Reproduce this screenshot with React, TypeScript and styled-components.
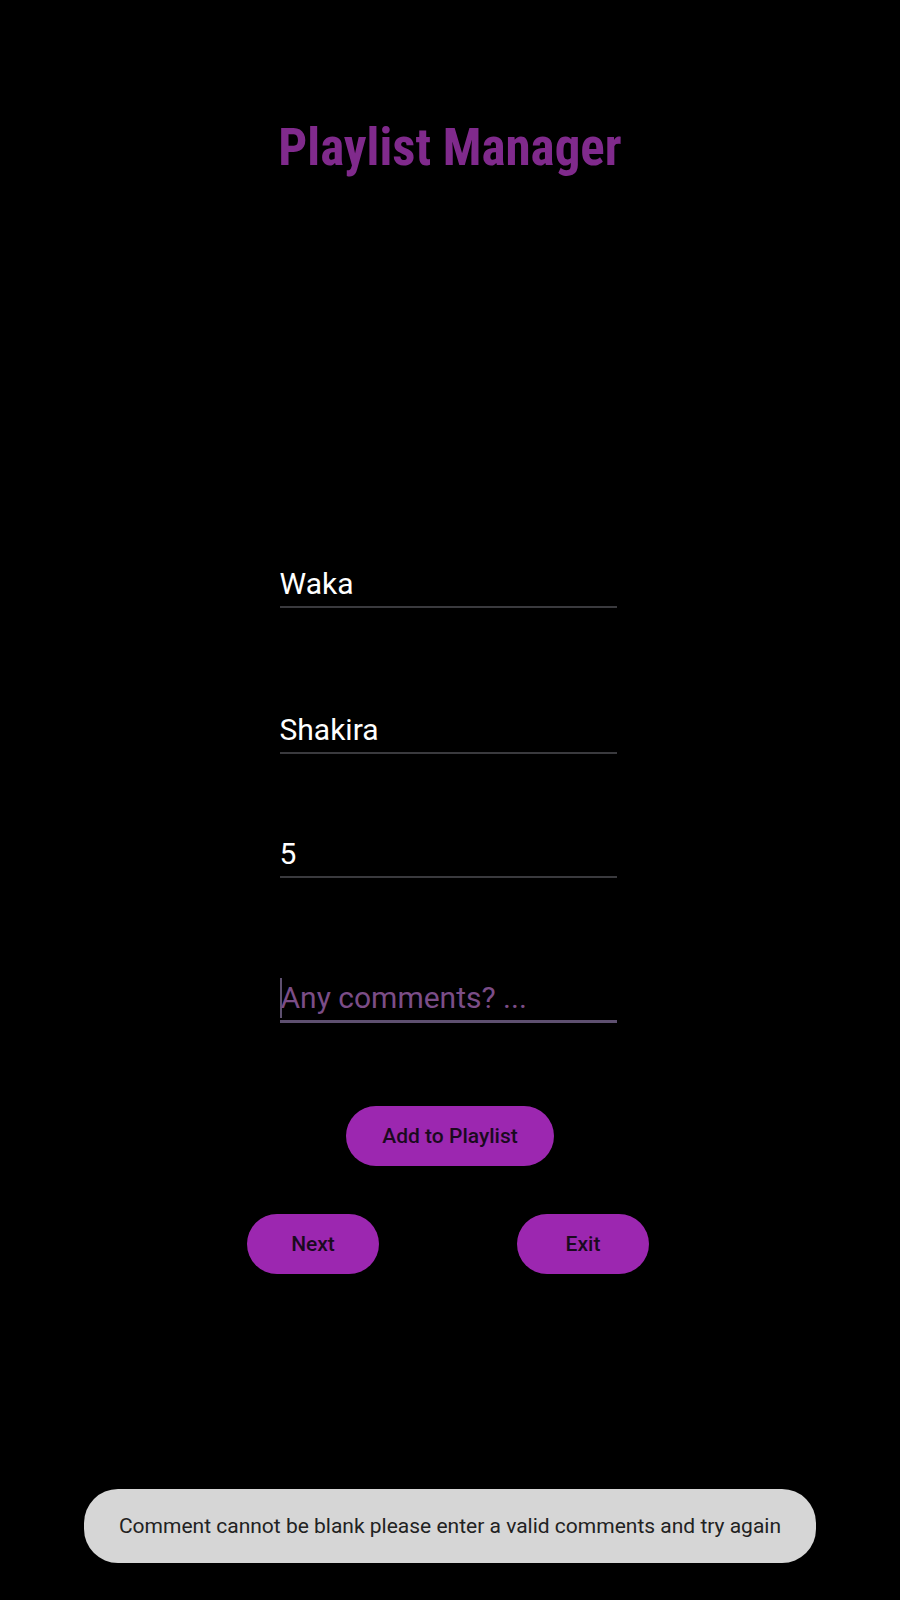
import React from "react";
import styled, { createGlobalStyle } from "styled-components";

const Global = createGlobalStyle`
  html, body { margin: 0; padding: 0; background: #000; }
  body { font-family: Roboto, "Noto Sans", sans-serif; }
  #root { min-height: 1600px; }
`;

const Page = styled.div`
  width: 900px;
  height: 1600px;
  background: #000;
  display: flex;
  flex-direction: column;
  align-items: center;
  box-sizing: border-box;
`;

const Title = styled.h1`
  margin: 118px 0 0;
  font-family: Roboto, "Liberation Sans", sans-serif;
  font-stretch: 75%;
  font-weight: 700;
  font-size: 51px;
  line-height: 60px;
  color: #802a8c;
`;

const Form = styled.div`
  width: 337px;
  display: flex;
  flex-direction: column;
  margin-top: 388px;
  margin-left: -4px;
`;

const Field = styled.div<{ $top: number; $focused?: boolean }>`
  margin-top: ${(p) => p.$top}px;
  height: 36px;
  padding-bottom: 4px;
  border-bottom: ${(p) => (p.$focused ? "3px solid #5e5070" : "2px solid #3a3a3e")};
  font-size: 30px;
  line-height: 36px;
  color: #fff;
  display: flex;
  align-items: center;
  white-space: nowrap;
`;

const Caret = styled.span`
  display: inline-block;
  width: 2px;
  height: 40px;
  background: #5e5070;
  margin-right: -1px;
`;

const Placeholder = styled.span`
  color: #7b4d87;
`;

const Actions = styled.div`
  display: flex;
  flex-direction: column;
  align-items: center;
  margin-top: 83px;
`;

const Pill = styled.button<{ $w: number }>`
  width: ${(p) => p.$w}px;
  height: 60px;
  border: none;
  border-radius: 30px;
  background: #9c27b0;
  color: #1a0a1e;
  font-family: Roboto, sans-serif;
  font-weight: 500;
  font-size: 21px;
  padding: 0;
  cursor: pointer;
`;

const NavRow = styled.div`
  display: flex;
  gap: 138px;
  margin-top: 48px;
  margin-left: -4px;
`;

const Toast = styled.div`
  margin-top: auto;
  margin-bottom: 37px;
  width: 732px;
  height: 74px;
  border-radius: 34px;
  background: #d6d6d6;
  color: #222;
  font-family: Roboto, sans-serif;
  font-size: 21px;
  display: flex;
  align-items: center;
  justify-content: center;
`;

export default function App() {
  return (
    <Page>
      <Global />
      <Title>Playlist Manager</Title>
      <Form>
        <Field $top={0}>Waka</Field>
        <Field $top={104}>Shakira</Field>
        <Field $top={82}>5</Field>
        <Field $top={102} $focused>
          <Caret />
          <Placeholder>Any comments? ...</Placeholder>
        </Field>
      </Form>
      <Actions>
        <Pill $w={208}>Add to Playlist</Pill>
        <NavRow>
          <Pill $w={132}>Next</Pill>
          <Pill $w={132}>Exit</Pill>
        </NavRow>
      </Actions>
      <Toast>Comment cannot be blank please enter a valid comments and try again</Toast>
    </Page>
  );
}
